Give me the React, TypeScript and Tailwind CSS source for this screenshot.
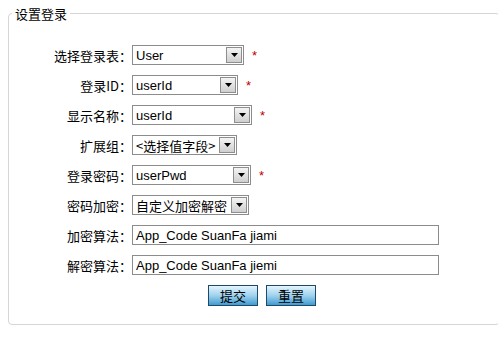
import React from 'react';

const cjk = "font-['SimSun','Noto_Sans_CJK_SC',sans-serif]";
const latin = "font-['Liberation_Sans','Noto_Sans_CJK_SC',sans-serif]";

function Arrow() {
  return (
    <span className="flex h-[16px] w-[16px] shrink-0 items-center justify-center border border-[#8e8e8e] bg-gradient-to-b from-[#f4f4f4] to-[#cfcfcf]">
      <svg width="7" height="4" viewBox="0 0 7 4">
        <path d="M0 0h7L3.5 4z" fill="#000" />
      </svg>
    </span>
  );
}

function Select({ value, width, cn }: { value: string; width: string; cn?: boolean }) {
  return (
    <div className={`flex h-[20px] items-center justify-between border border-[#8c8c8c] bg-white pl-[3px] pr-[1px] ${width}`}>
      <span className={`${cn ? cjk : latin} text-[13px] leading-none text-black whitespace-nowrap`}>{value}</span>
      <Arrow />
    </div>
  );
}

function Star() {
  return <span className="ml-[8px] text-[13px] leading-none text-[#c00000] font-['Liberation_Sans',sans-serif]">*</span>;
}

function Row({ label, children }: { label: string; children: React.ReactNode }) {
  return (
    <div className="flex h-[20px] items-center">
      <div className={`w-[123px] shrink-0 text-right text-[13px] leading-none text-black ${cjk}`}>{label}</div>
      {children}
    </div>
  );
}

function Btn({ label }: { label: string }) {
  return (
    <button className={`h-[21px] w-[50px] border border-[#1d4a68] bg-gradient-to-b from-[#e4f4fc] via-[#9fd2ee] to-[#3d9bd0] text-[13px] leading-none text-black ${cjk}`}>
      {label}
    </button>
  );
}

export default function App() {
  return (
    <div className="h-[342px] w-[498px] overflow-hidden bg-white pl-[8px] pt-[6px]">
      <fieldset className="h-[319px] w-[492px] rounded-[4px] border border-[#d6d6d6]">
        <legend className={`ml-[3px] px-[3px] text-[13px] leading-[15px] text-black ${cjk}`}>设置登录</legend>
        <div className="flex flex-col gap-[10px] pt-[24px]">
          <Row label="选择登录表：">
            <Select value="User" width="w-[112px]" />
            <Star />
          </Row>
          <Row label="登录ID：">
            <Select value="userId" width="w-[106px]" />
            <Star />
          </Row>
          <Row label="显示名称：">
            <Select value="userId" width="w-[120px]" />
            <Star />
          </Row>
          <Row label="扩展组：">
            <Select value="<选择值字段>" width="w-[105px]" cn />
          </Row>
          <Row label="登录密码：">
            <Select value="userPwd" width="w-[119px]" />
            <Star />
          </Row>
          <Row label="密码加密：">
            <Select value="自定义加密解密" width="w-[117px]" cn />
          </Row>
          <Row label="加密算法：">
            <div className={`flex h-[20px] w-[307px] items-center border border-[#8c8c8c] pl-[3px] text-[13px] leading-none ${latin}`}>App_Code SuanFa jiami</div>
          </Row>
          <Row label="解密算法：">
            <div className={`flex h-[20px] w-[307px] items-center border border-[#8c8c8c] pl-[3px] text-[13px] leading-none ${latin}`}>App_Code SuanFa jiemi</div>
          </Row>
          <div className="flex gap-[8px] pl-[199px]">
            <Btn label="提交" />
            <Btn label="重置" />
          </div>
        </div>
      </fieldset>
    </div>
  );
}
